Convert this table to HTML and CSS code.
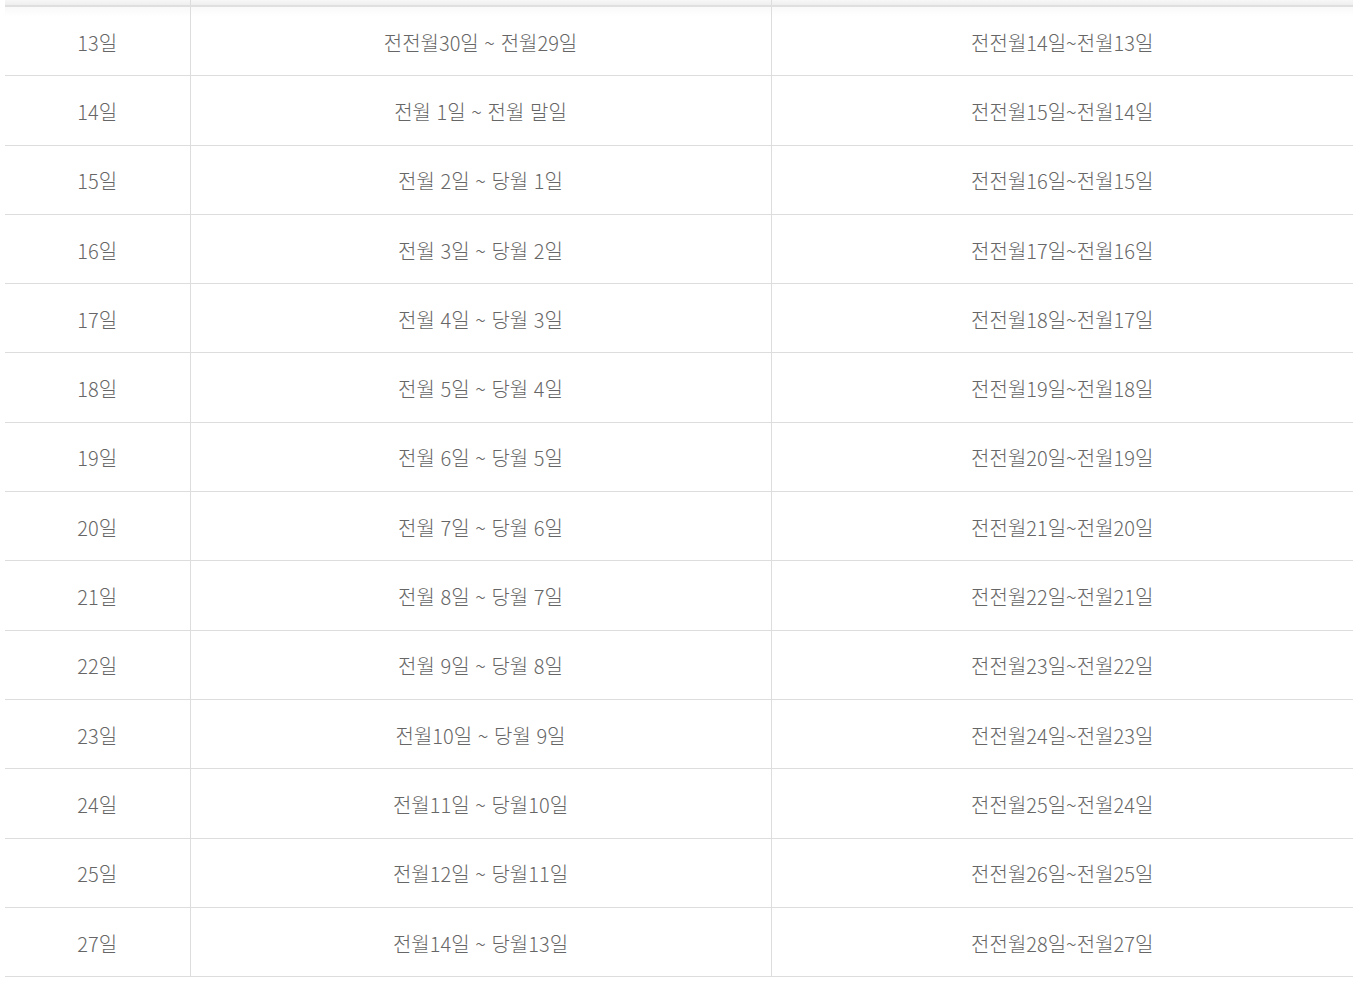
FILE: index.html
```html
<!DOCTYPE html>
<html lang="ko">
<head>
  <meta charset="UTF-8" />
  <meta name="viewport" content="width=device-width, initial-scale=1.0"/>
  <title>급여 정산 기간표</title>
  <link rel="stylesheet" href="styles.css">
</head>
<body>
  <div class="wrap">
    <table class="period">
      <colgroup>
        <col class="c-day">
        <col class="c-range">
        <col class="c-prev">
      </colgroup>
      <thead>
        <tr><th></th><th></th><th></th></tr>
      </thead>
      <tbody>
        <tr><td>13일</td><td>전전월30일 ~ 전월29일</td><td>전전월14일~전월13일</td></tr>
        <tr><td>14일</td><td>전월 1일 ~ 전월 말일</td><td>전전월15일~전월14일</td></tr>
        <tr><td>15일</td><td>전월 2일 ~ 당월 1일</td><td>전전월16일~전월15일</td></tr>
        <tr><td>16일</td><td>전월 3일 ~ 당월 2일</td><td>전전월17일~전월16일</td></tr>
        <tr><td>17일</td><td>전월 4일 ~ 당월 3일</td><td>전전월18일~전월17일</td></tr>
        <tr><td>18일</td><td>전월 5일 ~ 당월 4일</td><td>전전월19일~전월18일</td></tr>
        <tr><td>19일</td><td>전월 6일 ~ 당월 5일</td><td>전전월20일~전월19일</td></tr>
        <tr><td>20일</td><td>전월 7일 ~ 당월 6일</td><td>전전월21일~전월20일</td></tr>
        <tr><td>21일</td><td>전월 8일 ~ 당월 7일</td><td>전전월22일~전월21일</td></tr>
        <tr><td>22일</td><td>전월 9일 ~ 당월 8일</td><td>전전월23일~전월22일</td></tr>
        <tr><td>23일</td><td>전월10일 ~ 당월 9일</td><td>전전월24일~전월23일</td></tr>
        <tr><td>24일</td><td>전월11일 ~ 당월10일</td><td>전전월25일~전월24일</td></tr>
        <tr><td>25일</td><td>전월12일 ~ 당월11일</td><td>전전월26일~전월25일</td></tr>
        <tr><td>27일</td><td>전월14일 ~ 당월13일</td><td>전전월28일~전월27일</td></tr>
      </tbody>
    </table>
  </div>
</body>
</html>
```

FILE: styles.css
```css
html, body {
  background: #fff;
}
body {
  margin: 0;
  padding: 0 4px 0 5px;
  font-family: "Noto Sans CJK KR", "Noto Sans", sans-serif;
  color: #666;
}
.period {
  width: 100%;
  border-collapse: collapse;
  table-layout: fixed;
}
.c-day { width: 185px; }
.c-range { width: 581px; }
.period th {
  height: 5px;
  padding: 0;
  background: linear-gradient(#f7f7f7, #eeeeee);
  border-left: 1px solid #ddd;
  border-bottom: 2px solid #dfdfdf;
}
.period td {
  height: 65.3px;
  padding: 3px 0 0;
  text-align: center;
  font-size: 20px;
  font-weight: 300;
  line-height: 28px;
  border-left: 1px solid #ddd;
  border-bottom: 1px solid #ddd;
}
.period th:first-child,
.period td:first-child {
  border-left: none;
}
.period tbody tr:first-child td {
  background: linear-gradient(#f9f9f9, #fff 10px);
}
```
